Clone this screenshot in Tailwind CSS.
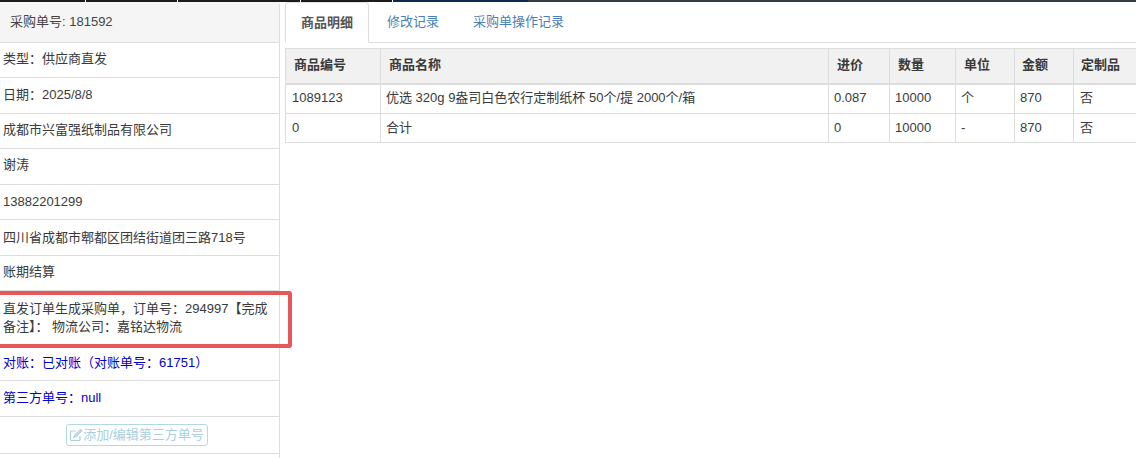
<!DOCTYPE html>
<html lang="en">
<head>
    <meta charset="UTF-8">
    <title>采购单</title>
    <script src="https://cdn.jsdelivr.net/npm/@tailwindcss/browser@4"></script>
</head>
<body class="bg-white w-[1136px] h-[458px] overflow-hidden relative text-[13px] leading-[18px] text-[#3a3a3a] font-['Liberation_Sans','Noto_Sans_CJK_SC',sans-serif]">

    <!-- top strip -->
    <div class="flex h-[2px]">
        <div class="w-[85px] bg-[#1c1c1c]"></div>
        <div class="w-px bg-white/60"></div>
        <div class="w-[91px] bg-[#1c1c1c]"></div>
        <div class="w-px bg-white/60"></div>
        <div class="w-[122px] bg-[#1c1c1c]"></div>
        <div class="w-px bg-white/60"></div>
        <div class="w-[91px] bg-[#1c1c1c]"></div>
        <div class="w-px bg-white/60"></div>
        <div class="w-[135px] bg-[#10284f]"></div>
        <div class="flex-1 bg-[#333d46]"></div>
    </div>

    <div class="flex">
        <!-- left panel -->
        <div class="w-[280px] h-[456px] shrink-0 border-r border-[#ddd] rounded-tr-[4px]">
            <div class="h-[41px] pl-[10px] flex items-center bg-[#f5f5f5] border-b border-[#ddd] rounded-tr-[4px] text-[#444]">采购单号: 181592</div>
            <div class="h-[35px] pl-[3px] pb-[2px] flex items-center border-b border-[#ddd]">类型：供应商直发</div>
            <div class="h-[36px] pl-[3px] pb-[2px] flex items-center border-b border-[#ddd]">日期：2025/8/8</div>
            <div class="h-[35px] pl-[3px] pb-[2px] flex items-center border-b border-[#ddd]">成都市兴富强纸制品有限公司</div>
            <div class="h-[36px] pl-[3px] pb-[3px] flex items-center border-b border-[#ddd]">谢涛</div>
            <div class="h-[35px] pl-[3px] flex items-center border-b border-[#ddd]">13882201299</div>
            <div class="h-[36px] pl-[3px] flex items-center border-b border-[#ddd]">四川省成都市郫都区团结街道团三路718号</div>
            <div class="h-[35px] pl-[3px] pb-[2px] flex items-center border-b border-[#ddd]">账期结算</div>
            <div class="h-[55px] pl-[3px] pr-[8px] flex items-center border-b border-[#ddd]"><p>直发订单生成采购单，订单号：294997【完成备注】： 物流公司：嘉铭达物流</p></div>
            <div class="h-[35px] pl-[3px] flex items-center border-b border-[#ddd] text-[#0000cc]">对账：已对账（对账单号：61751）</div>
            <div class="h-[36px] pl-[3px] pb-px flex items-center border-b border-[#ddd] text-[#0000cc]">第三方单号：null</div>
            <div class="h-[37px] pr-[6px] flex items-center justify-center border-b border-[#ddd]">
                <button class="h-[22px] w-[142px] flex items-center justify-center border border-[#b5d9e4] rounded-[3px] text-[#a8d0dd]">
                    <svg class="w-[14px] h-[14px]" viewBox="0 0 14 14" fill="none" stroke="currentColor" stroke-width="1.2">
                        <path d="M11 8v3.5a1 1 0 0 1-1 1H2.5a1 1 0 0 1-1-1V4a1 1 0 0 1 1-1H7"/>
                        <path d="M5.5 7.5 11.5 1.5l1.2 1.2-6 6-1.7.5z"/>
                    </svg>
                    添加/编辑第三方单号
                </button>
            </div>
        </div>

        <!-- right panel -->
        <div class="flex-1 min-w-0 pl-[5px]">
            <div class="h-[41px] flex border-b border-[#ddd]">
                <div class="w-[84px] h-[41px] flex items-center justify-center bg-white border border-[#ddd] border-b-white rounded-t-[4px] font-bold text-[#555]">商品明细</div>
                <div class="pl-[18px] pr-[19px] flex items-center text-[#4a80b5]">修改记录</div>
                <div class="px-[15px] flex items-center text-[#4a80b5]">采购单操作记录</div>
            </div>
            <table class="mt-[5px] w-[880px] table-fixed border-collapse">
                <thead>
                    <tr class="h-[35px] bg-[#f1f1f1] font-bold">
                        <td class="w-[95px] pl-[8px] pb-[2px] border border-[#ddd] border-b-2">商品编号</td>
                        <td class="w-[448px] pl-[8px] pb-[2px] border border-[#ddd] border-b-2">商品名称</td>
                        <td class="w-[61px] pl-[8px] pb-[2px] border border-[#ddd] border-b-2">进价</td>
                        <td class="w-[66px] pl-[8px] pb-[2px] border border-[#ddd] border-b-2">数量</td>
                        <td class="w-[59px] pl-[8px] pb-[2px] border border-[#ddd] border-b-2">单位</td>
                        <td class="w-[59px] pl-[7px] pb-[2px] border border-[#ddd] border-b-2">金额</td>
                        <td class="pl-[7px] pb-[2px] border border-[#ddd] border-b-2">定制品</td>
                    </tr>
                </thead>
                <tbody>
                    <tr class="h-[30px]">
                        <td class="pl-[6px] pb-[2px] border border-[#ddd]">1089123</td>
                        <td class="pl-[5px] pb-[2px] border border-[#ddd]">优选 320g 9盎司白色农行定制纸杯 50个/提 2000个/箱</td>
                        <td class="pl-[5px] pb-[2px] border border-[#ddd]">0.087</td>
                        <td class="pl-[5px] pb-[2px] border border-[#ddd]">10000</td>
                        <td class="pl-[5px] pb-[2px] border border-[#ddd]">个</td>
                        <td class="pl-[5px] pb-[2px] border border-[#ddd]">870</td>
                        <td class="pl-[6px] pb-[2px] border border-[#ddd]">否</td>
                    </tr>
                    <tr class="h-[29px]">
                        <td class="pl-[6px] border border-[#ddd]">0</td>
                        <td class="pl-[5px] border border-[#ddd]">合计</td>
                        <td class="pl-[5px] border border-[#ddd]">0</td>
                        <td class="pl-[5px] border border-[#ddd]">10000</td>
                        <td class="pl-[5px] border border-[#ddd]">-</td>
                        <td class="pl-[5px] border border-[#ddd]">870</td>
                        <td class="pl-[6px] border border-[#ddd]">否</td>
                    </tr>
                </tbody>
            </table>
        </div>
    </div>

    <!-- red annotation box -->
    <div class="absolute left-[-4px] top-[291px] w-[296px] h-[57px] border-[4px] border-[#e9565a] rounded-[3px]"></div>

</body>
</html>
